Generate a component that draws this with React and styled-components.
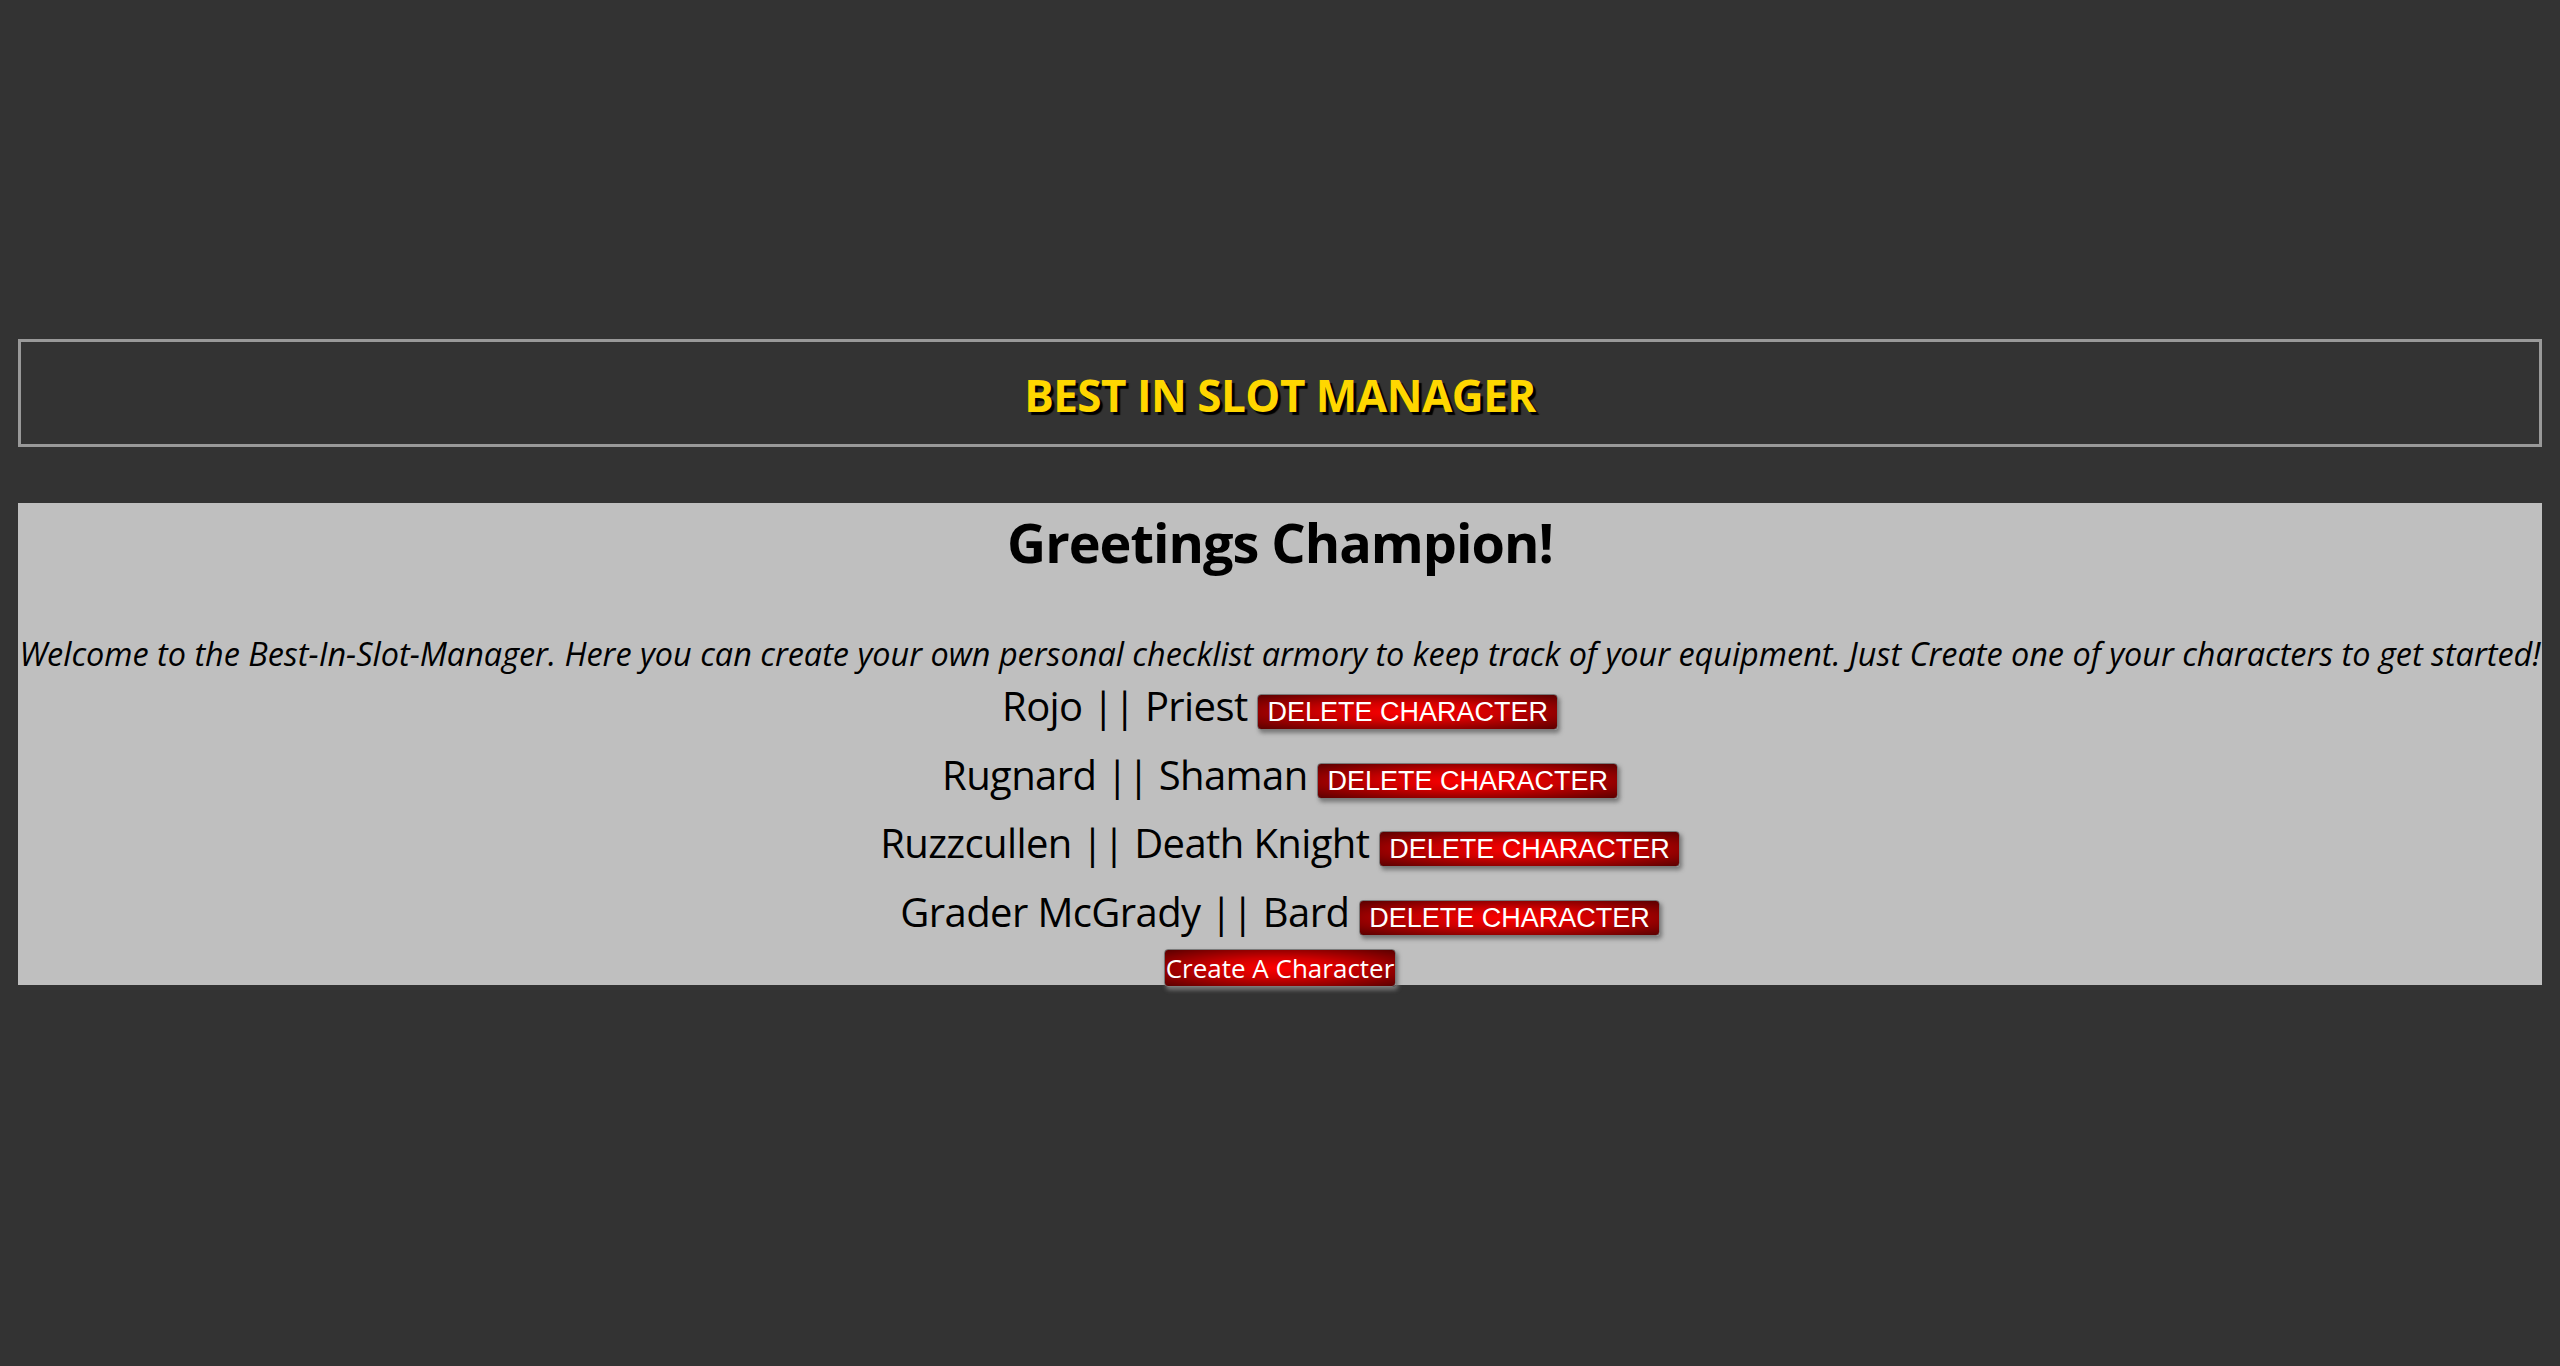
import React from "react";
import styled, { createGlobalStyle } from "styled-components";

const GlobalStyle = createGlobalStyle`
  html, body {
    margin: 0;
    padding: 0;
    background: #333333;
  }
  body {
    font-family: "Open Sans", "Noto Sans", sans-serif;
    min-height: 1366px;
  }
`;

const Page = styled.div`
  padding: 339px 18px 0;
  display: flex;
  flex-direction: column;
`;

const Header = styled.header`
  height: 108px;
  box-sizing: border-box;
  border: 3px solid #999999;
  display: flex;
  align-items: center;
  justify-content: center;
  padding-top: 3px;
`;

const Title = styled.h1`
  margin: 0;
  font-size: 44px;
  line-height: 56px;
  letter-spacing: -0.5px;
  font-weight: 700;
  color: #ffd700;
  text-shadow: 3px 3px 1px #000000;
`;

const Main = styled.main`
  margin-top: 56px;
  height: 482px;
  background: #bfbfbf;
  display: flex;
  flex-direction: column;
  align-items: center;
  padding-top: 5px;
  box-sizing: border-box;
  color: #000000;
`;

const Greeting = styled.h2`
  margin: 0;
  font-size: 54px;
  line-height: 68px;
  letter-spacing: -1px;
  font-weight: 700;
`;

const Welcome = styled.p`
  margin: 58px 0 0;
  font-size: 32.4px;
  line-height: 38px;
  font-style: italic;
  white-space: nowrap;
`;

const CharacterRow = styled.div`
  font-size: 40px;
  line-height: 68.6px;
  letter-spacing: -0.6px;
  white-space: nowrap;
`;

const RedButton = styled.button`
  display: inline-block;
  box-sizing: border-box;
  border: 1px solid #7a7a7a;
  border-radius: 4px;
  color: #ffffff;
  cursor: pointer;
  letter-spacing: 0;
  background: radial-gradient(ellipse at center, #ff0000 0%, #d00000 40%, #5a0000 100%);
  box-shadow: 2px 3px 4px #777777;
`;

const DeleteButton = styled(RedButton)`
  font-family: "Liberation Sans", Arial, sans-serif;
  font-size: 27px;
  height: 36px;
  line-height: 34px;
  padding: 0 9px;
  vertical-align: baseline;
`;

const CreateButton = styled(RedButton)`
  margin-top: 3px;
  font-family: "Open Sans", "Noto Sans", sans-serif;
  font-size: 26px;
  height: 39px;
  line-height: 36px;
  padding: 0 1px;
`;

const characters = [
  { name: "Rojo", cls: "Priest" },
  { name: "Rugnard", cls: "Shaman" },
  { name: "Ruzzcullen", cls: "Death Knight" },
  { name: "Grader McGrady", cls: "Bard" },
];

export default function App() {
  return (
    <>
      <GlobalStyle />
      <Page>
        <Header>
          <Title>BEST IN SLOT MANAGER</Title>
        </Header>
        <Main>
          <Greeting>Greetings Champion!</Greeting>
          <Welcome>
            Welcome to the Best-In-Slot-Manager. Here you can create your own personal checklist armory to keep track of your equipment. Just Create one of your characters to get started!
          </Welcome>
          {characters.map((c) => (
            <CharacterRow key={c.name}>
              {c.name} || {c.cls} <DeleteButton>DELETE CHARACTER</DeleteButton>
            </CharacterRow>
          ))}
          <CreateButton>Create A Character</CreateButton>
        </Main>
      </Page>
    </>
  );
}
